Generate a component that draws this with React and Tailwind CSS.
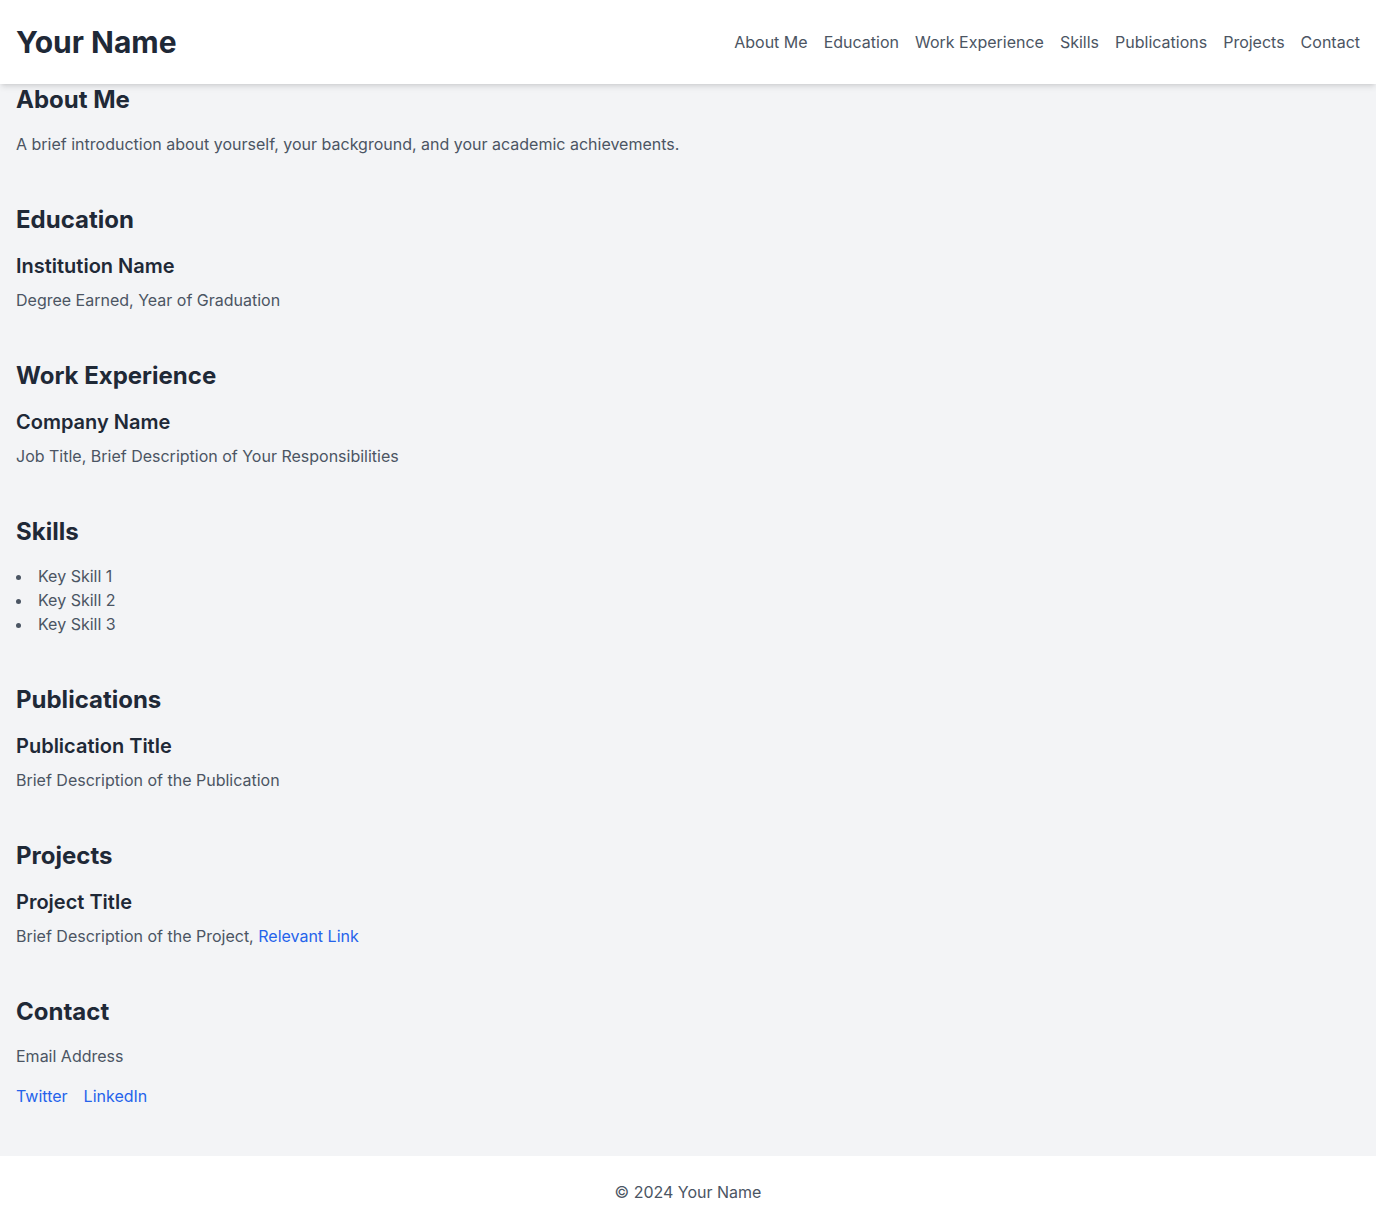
import React from 'react';

const navItems = ['About Me', 'Education', 'Work Experience', 'Skills', 'Publications', 'Projects', 'Contact'];

const Section = ({ title, children }) => (
  <section className="mb-12">
    <h2 className="text-2xl font-bold text-[#1f2937] mb-4">{title}</h2>
    {children}
  </section>
);

const Entry = ({ title, children }) => (
  <div>
    <h3 className="text-xl font-semibold text-[#1f2937] mb-2">{title}</h3>
    <p className="text-[#4b5563]">{children}</p>
  </div>
);

export default function App() {
  return (
    <div className="min-h-screen bg-[#f3f4f6]" style={{ fontFamily: 'Inter, "Noto Sans", sans-serif' }}>
      <header className="bg-white shadow-md">
        <div className="px-4 py-6 flex items-center justify-between">
          <h1 className="text-3xl font-bold text-[#1f2937]">Your Name</h1>
          <nav className="flex gap-4">
            {navItems.map((item) => (
              <a key={item} href="#" className="text-[#4b5563] hover:text-gray-900">
                {item}
              </a>
            ))}
          </nav>
        </div>
      </header>

      <main className="px-4">
        <Section title="About Me">
          <p className="text-[#4b5563]">
            A brief introduction about yourself, your background, and your academic achievements.
          </p>
        </Section>

        <Section title="Education">
          <Entry title="Institution Name">Degree Earned, Year of Graduation</Entry>
        </Section>

        <Section title="Work Experience">
          <Entry title="Company Name">Job Title, Brief Description of Your Responsibilities</Entry>
        </Section>

        <Section title="Skills">
          <ul className="list-disc list-inside text-[#4b5563]">
            <li>Key Skill 1</li>
            <li>Key Skill 2</li>
            <li>Key Skill 3</li>
          </ul>
        </Section>

        <Section title="Publications">
          <Entry title="Publication Title">Brief Description of the Publication</Entry>
        </Section>

        <Section title="Projects">
          <Entry title="Project Title">
            Brief Description of the Project,{' '}
            <a href="#" className="text-[#2563eb] hover:underline">Relevant Link</a>
          </Entry>
        </Section>

        <Section title="Contact">
          <p className="text-[#4b5563] mb-4">Email Address</p>
          <div className="flex gap-4">
            <a href="#" className="text-[#2563eb] hover:underline">Twitter</a>
            <a href="#" className="text-[#2563eb] hover:underline">LinkedIn</a>
          </div>
        </Section>
      </main>

      <footer className="bg-white py-6">
        <p className="text-center text-[#4b5563]">© 2024 Your Name</p>
      </footer>
    </div>
  );
}
